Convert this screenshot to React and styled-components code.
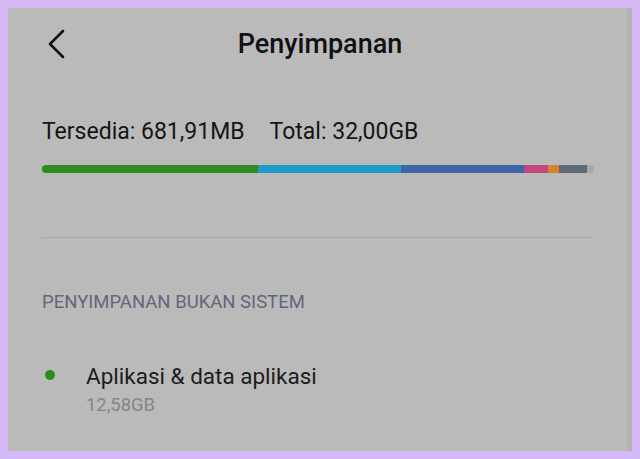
import React from "react";
import styled, { createGlobalStyle } from "styled-components";

const Global = createGlobalStyle`
  html, body { margin: 0; padding: 0; }
  body { font-family: Roboto, "Noto Sans", sans-serif; }
`;

const Frame = styled.div`
  width: 640px;
  height: 459px;
  box-sizing: border-box;
  border: 8px solid #d5b8f6;
  background: #bababa;
  box-shadow: inset -5px 0 0 #b4b4b4;
  overflow: hidden;
  display: flex;
  flex-direction: column;
`;

const Header = styled.header`
  position: relative;
  height: 72px;
  display: flex;
  align-items: center;
  justify-content: center;
`;

const BackButton = styled.button`
  position: absolute;
  left: 34px;
  top: 19px;
  width: 28px;
  height: 34px;
  padding: 0;
  border: 0;
  background: none;
  display: flex;
  align-items: center;
  justify-content: center;
`;

const Title = styled.h1`
  margin: 0;
  font-size: 27px;
  font-weight: 500;
  color: #111;
  letter-spacing: 0;
`;

const Body = styled.div`
  padding: 0 38px 0 34px;
  display: flex;
  flex-direction: column;
`;

const Summary = styled.div`
  margin-top: 38px;
  display: flex;
  gap: 25px;
  font-size: 23px;
  color: #151515;
  line-height: 28px;
`;

const Bar = styled.div`
  margin-top: 19px;
  height: 8px;
  border-radius: 4px;
  background: #a9a9a9;
  display: flex;
  overflow: hidden;
`;

const Segment = styled.div`
  height: 100%;
  background: ${(p) => p.$color};
`;

const Divider = styled.hr`
  margin: 64px 0 0;
  border: 0;
  border-top: 1px solid #a8a8a8;
`;

const SectionLabel = styled.div`
  margin-top: 53px;
  font-size: 18.5px;
  color: #62667a;
  line-height: 22px;
`;

const Item = styled.div`
  margin-top: 49px;
  display: grid;
  grid-template-columns: 44px 1fr;
  align-items: start;
`;

const Dot = styled.span`
  width: 10px;
  height: 10px;
  border-radius: 50%;
  background: ${(p) => p.$color};
  margin: 8px 0 0 3px;
`;

const ItemText = styled.div`
  display: flex;
  flex-direction: column;
`;

const ItemTitle = styled.div`
  font-size: 22.5px;
  line-height: 28px;
  color: #1c1c1c;
`;

const ItemSize = styled.div`
  margin-top: 4px;
  font-size: 18.4px;
  line-height: 22px;
  color: #858585;
`;

const segments = [
  { color: "#2f8a22", w: 216 },
  { color: "#1f9bc7", w: 143 },
  { color: "#3c66a6", w: 123 },
  { color: "#c2497f", w: 24 },
  { color: "#d8822a", w: 11 },
  { color: "#5e6a79", w: 28 },
];

export default function App() {
  return (
    <>
      <Global />
      <Frame>
        <Header>
          <BackButton aria-label="Kembali">
            <svg width="22" height="32" viewBox="0 0 22 32" fill="none">
              <path d="M18 3 L5 16 L18 29" stroke="#111" strokeWidth="2.6" strokeLinecap="round" strokeLinejoin="round" />
            </svg>
          </BackButton>
          <Title>Penyimpanan</Title>
        </Header>
        <Body>
          <Summary>
            <span>Tersedia: 681,91MB</span>
            <span>Total: 32,00GB</span>
          </Summary>
          <Bar>
            {segments.map((s, i) => (
              <Segment key={i} $color={s.color} style={{ width: s.w }} />
            ))}
          </Bar>
          <Divider />
          <SectionLabel>PENYIMPANAN BUKAN SISTEM</SectionLabel>
          <Item>
            <Dot $color="#2f8a22" />
            <ItemText>
              <ItemTitle>Aplikasi &amp; data aplikasi</ItemTitle>
              <ItemSize>12,58GB</ItemSize>
            </ItemText>
          </Item>
        </Body>
      </Frame>
    </>
  );
}
